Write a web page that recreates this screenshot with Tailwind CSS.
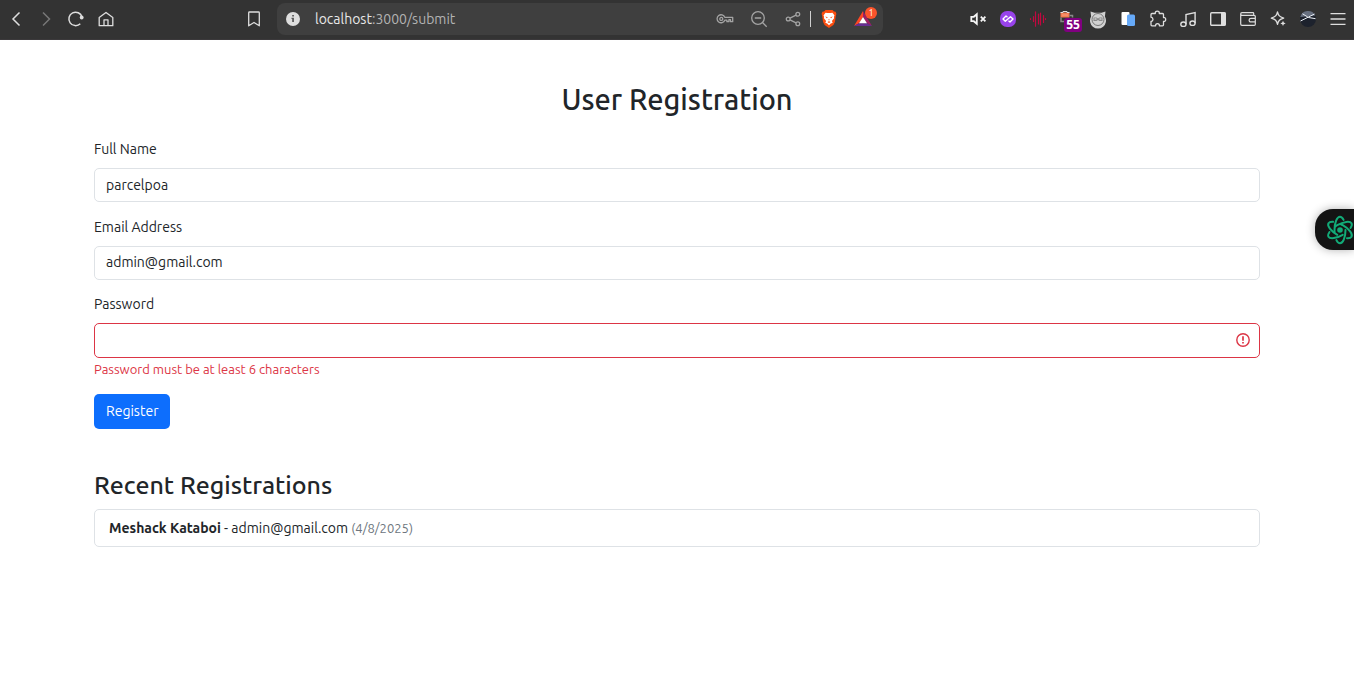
<!DOCTYPE html>
<html lang="en">
<head>
<meta charset="utf-8">
<meta name="viewport" content="width=device-width, initial-scale=1">
<title>User Registration</title>
<script src="https://cdn.jsdelivr.net/npm/@tailwindcss/browser@4"></script>
</head>
<body class="min-h-screen bg-white font-['Ubuntu','Noto_Sans',sans-serif] text-sm text-[#212529]">
<header class="flex h-10 items-center border-b border-[#3b393b] bg-[#333333] px-px pb-px text-[#dedede]">
  <nav class="flex" aria-label="History">
    <button class="grid h-8 w-[30px] place-items-center" aria-label="Back"><svg class="size-5" viewBox="0 0 20 20" fill="none" stroke="currentColor" stroke-width="1.5"><path d="M13.500 3.500 7 10l6.500 6.500"/></svg></button>
    <button class="grid h-8 w-[30px] place-items-center text-[#777777]" aria-label="Forward"><svg class="size-5" viewBox="0 0 20 20" fill="none" stroke="currentColor" stroke-width="1.500"><path d="M7 3.500 13.500 10 7 16.500"/></svg></button>
    <button class="grid h-8 w-[30px] place-items-center" aria-label="Reload"><svg class="size-5" viewBox="0 0 20 20" fill="none" stroke="currentColor" stroke-width="1.500"><path d="M14.300 14.700A6.700 6.700 0 1 1 16 8"/><circle cx="15.700" cy="8.500" r="1.900" fill="currentColor" stroke="none"/></svg></button>
    <button class="grid h-8 w-[30px] place-items-center" aria-label="Home"><svg class="size-5" viewBox="0 0 20 20" fill="none" stroke="currentColor" stroke-width="1.300" stroke-linejoin="round"><path d="M3.200 8.500 10 3.500l6.800 5v8.200H3.200zM8 16.700v-5.900h4v5.900"/></svg></button>
  </nav>
  <div class="flex min-w-0 flex-1 items-center pr-20 pl-[118px]">
    <button class="grid h-8 w-[30px] shrink-0 place-items-center" aria-label="Bookmark this page"><svg class="size-5" viewBox="0 0 20 20" fill="none" stroke="currentColor" stroke-width="1.300" stroke-linejoin="round"><path d="M4.700 3.800q0-.8.8-.8h9q.8 0 .8.800v13L10 13.500l-5.300 3.300z"/></svg></button>
    <div class="ml-2 flex h-8 min-w-0 flex-1 items-center rounded-lg bg-[#3f3f3f] pr-[3px]">
      <button class="grid size-8 shrink-0 place-items-center" aria-label="Site information"><svg class="size-4" viewBox="0 0 16 16"><circle cx="8" cy="8" r="7" fill="#dedede"/><path d="M7.200 4h1.700v1.600H7.200zM6.500 6.800h2.400v4.300H7.200V8h-.7z" fill="#555"/></svg></button>
      <a href="#" class="ml-[6px] flex-1 truncate leading-5 text-[#b3b3b3]"><span class="text-[#e8e8e8]">localhost</span>:3000/submit</a>
      <div class="flex shrink-0 items-center text-[#a4a4a4]">
        <button class="grid h-8 w-[34px] place-items-center" aria-label="Passwords"><svg class="size-5" viewBox="0 0 20 20" fill="none" stroke="currentColor" stroke-width="1.300" stroke-linejoin="round"><path d="M9.800 8.300h7.900v4.400h-2.200v-2h-1.600v2h-2v-1.500H9.800a4 4 0 1 1 0-2.900z"/><circle cx="6.300" cy="9.900" r="1.500"/></svg></button>
        <button class="grid h-8 w-[34px] place-items-center" aria-label="Zoom"><svg class="size-5" viewBox="0 0 20 20" fill="none" stroke="currentColor" stroke-width="1.300"><circle cx="9" cy="9" r="6.300"/><path d="M5.800 9h6.400M13.500 13.500l4.200 4.200"/></svg></button>
        <button class="grid h-8 w-[34px] place-items-center" aria-label="Share"><svg class="size-5" viewBox="0 0 20 20" fill="none" stroke="currentColor" stroke-width="1.300"><circle cx="5.200" cy="10" r="1.900"/><circle cx="14.800" cy="5.300" r="1.900"/><circle cx="14.800" cy="14.700" r="1.900"/><path d="m7 9.100 6-3M7 10.900l6 3"/></svg></button>
        <span class="h-4 w-px bg-[#d0d0d0]"></span>
        <button class="ml-px grid h-8 w-[34px] place-items-center" aria-label="Brave Shields"><svg class="size-5" viewBox="0 0 20 20"><path d="M6.500 1h7L15 2.500l1.700.3.700 2.200-.5 1.500-1 6.500-1.500 2.900L10 19l-4.400-3.100L4.100 13l-1-6.500L2.600 5l.7-2.200L5 2.500z" fill="#fb4d0f"/><path d="m6.500 3.700 2.100.3h2.800l2.100-.3 2 2.700-.6 1.300.2 1.600-2.200 2.700.8 1.800-1.900.8-1.800 1.700-1.800-1.700-1.900-.8.800-1.800-2.200-2.700.2-1.600-.6-1.300z" fill="#fff"/><path d="m6.300 7.500 2.500.7-.9 1zm7.400 0-2.500.7.900 1zM9 10.500h2l-1 1zm-.6 2.400 1.600-.6 1.600.6-1.600 1z" fill="#fb4d0f"/></svg></button>
        <button class="relative grid h-8 w-[34px] place-items-center" aria-label="Brave Rewards, 1 notification"><svg class="size-5" viewBox="0 0 20 20"><path d="M10 2 1 17l5-2.700L10 8z" fill="#ff4724"/><path d="m10 2 9 15-5-2.700L10 8z" fill="#9e1f63"/><path d="M1 17h18l-5-2.700H6z" fill="#662d91"/><path d="m10 8 4 6.300H6z" fill="#fff"/></svg><span class="absolute top-[4px] right-[3px] grid size-3 place-items-center rounded-full bg-[#fb542b] text-[9px] leading-3 text-white">1</span></button>
      </div>
    </div>
  </div>
  <div class="flex shrink-0">
    <button class="grid h-8 w-[30px] place-items-center" aria-label="Mute"><svg class="size-5" viewBox="0 0 20 20" fill="none" stroke="#f5f5f5" stroke-width="1.800"><path d="M3.300 7.800h2.500l3-2.600v9.600l-3-2.600H3.300z"/><path d="m12.800 7.700 4.600 4.600m0-4.600-4.600 4.600"/></svg></button>
    <button class="grid h-8 w-[30px] place-items-center" aria-label="Link extension"><svg class="size-5" viewBox="0 0 20 20" fill="none"><rect x="2" y="2" width="16" height="16" rx="7" fill="#9843eb"/><path d="M9.500 8.200 8 7 5 10l2.300 2.300L12.500 7.700 15 10l-3 3-1.500-1.200" stroke="#fff" stroke-width="1.400" stroke-linejoin="round"/></svg></button>
    <button class="grid h-8 w-[30px] place-items-center" aria-label="Audio extension"><svg class="size-5" viewBox="0 0 20 20" stroke="#c1083f" stroke-width="1.200" stroke-linecap="round"><path d="M2.500 9.500v1M5.500 7.500v5M7.500 2.800v14.400M10.500 5v10M12.500 4v12M15.500 6.500v7M17.500 9.500v1"/></svg></button>
    <button class="relative grid h-8 w-[30px] place-items-center" aria-label="Requests, 55"><svg class="size-5" viewBox="0 0 20 20"><path d="M2.500 3.500h9v5h-9z" fill="#f47c50"/><path d="M2.500 3.500H5v-1h4v1h2.500" stroke="#ddd" fill="none"/><path d="M3 8.500v4h3m5.500-6h3v2" stroke="#888" stroke-width="1.500" fill="none"/><path d="M4 6h6" stroke="#f9a080"/></svg><span class="absolute top-[15px] left-[11px] grid h-[14px] w-[18px] place-items-center rounded-[3px] bg-[#800080] font-['Noto_Sans'] text-xs leading-3 font-bold text-white">55</span></button>
    <button class="grid h-8 w-[30px] place-items-center" aria-label="Cat extension"><svg class="size-5" viewBox="0 0 20 20" fill="none"><path d="m2.500 2.500 4 1.200h7l4-1.200-.6 5a8 8 0 1 1-13.800 0z" fill="#d1d1d1"/><circle cx="10" cy="10.500" r="6" stroke="#777" stroke-width="1"/><path d="M5.500 8.500h3l1.500 1 1.500-1h3v3.500h-3l-1.500-1-1.500 1h-3z" fill="#888"/><path d="M6.500 10h2m3 0h2" stroke="#eee"/></svg></button>
    <button class="grid h-8 w-[30px] place-items-center" aria-label="Copy extension"><svg class="size-5" viewBox="0 0 20 20"><rect x="3.500" y="3" width="8" height="13" rx="1" fill="#fff"/><rect x="9" y="5.500" width="8" height="11.500" rx="1.500" fill="#66aaf9"/></svg></button>
    <button class="grid h-8 w-[30px] place-items-center" aria-label="Extensions"><svg class="size-5" viewBox="0 0 20 20" fill="none" stroke="currentColor" stroke-width="1.300" stroke-linejoin="round"><path d="M3 5.500q0-1 1-1h3.300q-.3-2.300 2-2.300t2 2.300h3.200q1 0 1 1v3q2.200-.2 2.200 1.900t-2.200 1.900v3.500q0 1-1 1h-3.100q.2-2.100-1.900-2.100t-1.900 2.100H4q-1 0-1-1v-3.300q2-.3 2-2.100T3 8.200z"/></svg></button>
    <button class="grid h-8 w-[30px] place-items-center" aria-label="Media"><svg class="size-5" viewBox="0 0 20 20" fill="none" stroke="currentColor" stroke-width="1.400"><ellipse cx="5.400" cy="15.200" rx="2.600" ry="2.200"/><ellipse cx="14.500" cy="14.200" rx="2.600" ry="2.200"/><path d="M8 15.200V5.500l9.100-2v10.700"/></svg></button>
    <button class="grid h-8 w-[30px] place-items-center" aria-label="Sidebar"><svg class="size-5" viewBox="0 0 20 20"><rect x="2.700" y="3.700" width="14.600" height="12.600" rx="1" fill="none" stroke="currentColor" stroke-width="1.400"/><path d="M13 3.500h4.500v13H13z" fill="currentColor"/></svg></button>
    <button class="grid h-8 w-[30px] place-items-center" aria-label="Wallet"><svg class="size-5" viewBox="0 0 20 20" fill="none" stroke="currentColor" stroke-width="1.200" stroke-linejoin="round"><path d="M15.700 6.300V4.500q0-.8-.8-.8H4q-1.300 0-1.300 1.300T4 6.300h12.200q1.100 0 1.100 1.100v7.900q0 1.100-1.100 1.100H4q-1.300 0-1.300-1.300V5M17.300 9.300H13q-1.900 0-1.900 1.800T13 12.900h4.300"/></svg></button>
    <button class="grid h-8 w-[30px] place-items-center" aria-label="Assistant"><svg class="size-5" viewBox="0 0 20 20" fill="none" stroke="currentColor" stroke-width="1.300" stroke-linejoin="round"><path d="M9.500 2.800c.9 3.800 2 5 6.200 6.300-4.200 1.200-5.300 2.400-6.200 6.300-.9-3.900-2-5.100-6.200-6.300 4.200-1.300 5.300-2.500 6.200-6.300z"/><path d="m15 11.700.8 1.900 1.900.8-1.900.8-.8 1.900-.8-1.900-1.900-.8 1.900-.8z" fill="currentColor" stroke="none"/></svg></button>
    <button class="grid h-8 w-[30px] place-items-center" aria-label="Profile"><svg class="size-5" viewBox="0 0 20 20" fill="none"><circle cx="10" cy="10" r="8" fill="#1d222d"/><path d="M2.300 8A8 8 0 0 1 17.200 6.500z" fill="#687080"/><path d="M2.500 12 16.500 5M4.500 4.800l6 3.700 7 1.200" stroke="#e9edf3" stroke-width="1"/></svg></button>
    <button class="grid h-8 w-[30px] place-items-center" aria-label="Menu"><svg class="size-5" viewBox="0 0 20 20" stroke="currentColor" stroke-width="1.300"><path d="M2.500 4.700h15M2.500 10h15M2.500 15.300h15"/></svg></button>
  </div>
</header>

<main class="mx-auto max-w-[1190px] px-3 pt-[41px]">
  <h1 class="mb-[22px] text-center text-[29px] leading-9 font-medium">User Registration</h1>
  <form>
    <label for="name" class="mb-[9px] block leading-5">Full Name</label>
    <input id="name" type="text" value="parcelpoa" class="mb-[15px] block h-[34px] w-full rounded-[5px] border border-[#dee2e6] px-[11px] outline-none">
    <label for="email" class="mb-[9px] block leading-5">Email Address</label>
    <input id="email" type="email" value="admin@gmail.com" class="mb-[14px] block h-[34px] w-full rounded-[5px] border border-[#dee2e6] px-[11px] pb-[2px] outline-none">
    <label for="password" class="mb-[9px] block leading-5">Password</label>
    <div class="relative">
      <input id="password" type="password" aria-invalid="true" aria-describedby="password-error" class="block h-[35px] w-full rounded-[5px] border border-[#dc3545] pr-9 pl-[11px] outline-none">
      <svg class="absolute top-[10px] right-[10px] size-[14px]" viewBox="0 0 14 14" fill="none" stroke="#dc3545" stroke-width="1.400"><circle cx="7" cy="7" r="6.200"/><path d="M7 3.300v4.400M7 9v1.600" stroke-width="1.700"/></svg>
    </div>
    <p id="password-error" class="mt-px mb-[15px] text-[13px] leading-5 text-[#dc3545]">Password must be at least 6 characters</p>
    <button type="submit" class="block h-[35px] rounded-[5px] bg-[#0d6efd] px-3 pb-px text-white">Register</button>
  </form>
  <section class="mt-10">
    <h2 class="mb-2 text-[25px] leading-8 font-medium">Recent Registrations</h2>
    <ul class="rounded-[5px] border border-[#dee2e6]">
      <li class="px-[14px] py-2 leading-5"><strong class="font-semibold">Meshack Kataboi</strong> - admin@gmail.com <small class="text-[13px] text-[#6c757d]">(4/8/2025)</small></li>
    </ul>
  </section>
</main>

<button class="fixed top-[209px] right-0 flex h-[41px] w-[39px] items-center rounded-l-[18px] bg-[#141414] pl-[10px] shadow-[0_0_10px_rgba(0,0,0,0.3)]" aria-label="Open assistant">
  <svg class="size-[30px] shrink-0" viewBox="0 0 30 30" fill="none" stroke="#12ab78" stroke-width="2" stroke-linecap="round"><circle cx="15" cy="15" r="2.800" fill="#12ab78" stroke="none"/><ellipse cx="15" cy="15" rx="5.500" ry="13.300" pathLength="60" stroke-dasharray="20 8 22 10"/><ellipse cx="15" cy="15" rx="5.500" ry="13.300" pathLength="60" stroke-dasharray="20 8 22 10" transform="rotate(60 15 15)"/><ellipse cx="15" cy="15" rx="5.500" ry="13.300" pathLength="60" stroke-dasharray="20 8 22 10" transform="rotate(120 15 15)"/></svg>
</button>
</body>
</html>
